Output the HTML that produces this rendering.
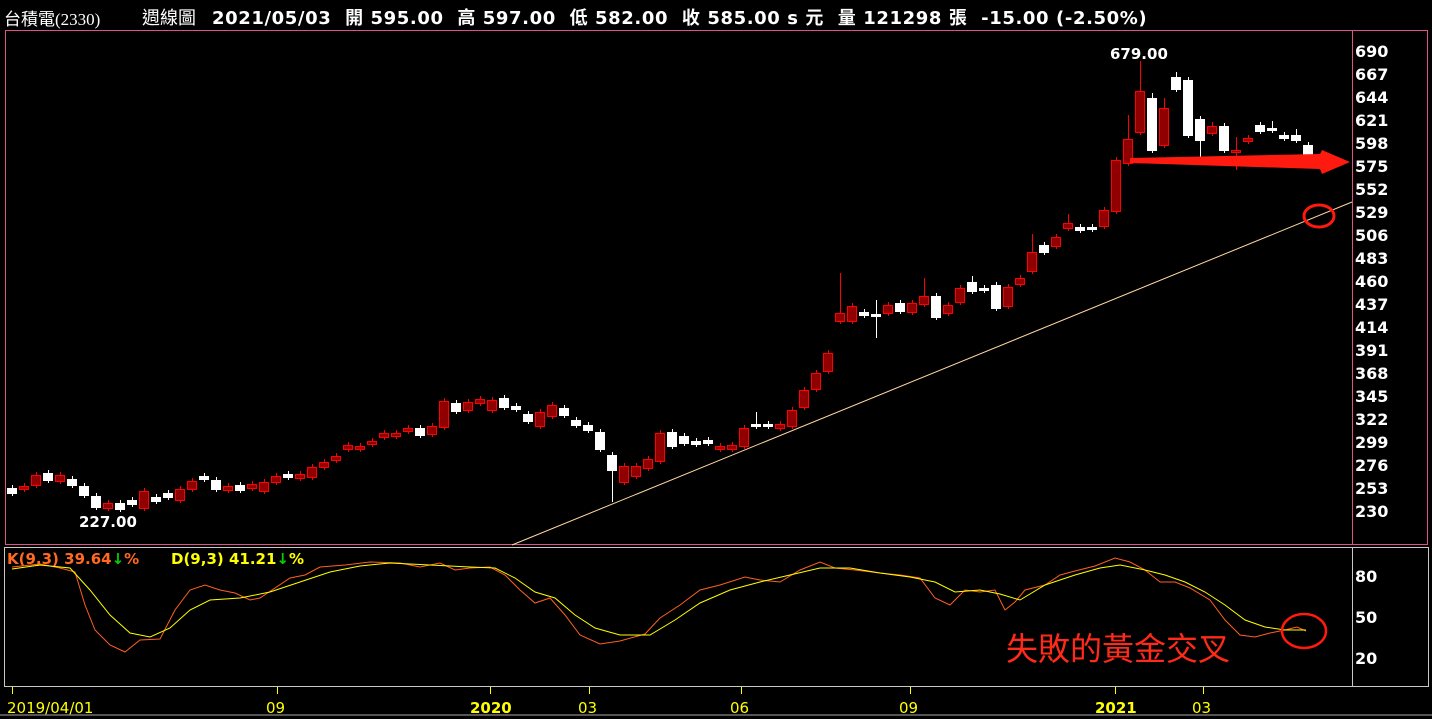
<!DOCTYPE html>
<html><head><meta charset="utf-8"><style>
html,body{margin:0;padding:0;background:#000;width:1432px;height:719px;overflow:hidden}
.h{position:absolute;top:4px;color:#fff;font:bold 18px "DejaVu Sans","Noto Sans CJK TC",sans-serif;white-space:nowrap;letter-spacing:0.6px}
</style></head><body>
<div class="h" style="left:4px;font:17px 'Liberation Serif','Noto Sans CJK TC',serif;top:5px;letter-spacing:0">台積電(2330)</div>
<div class="h" style="left:142px;font-weight:normal;letter-spacing:0"><span style="font-family:'Noto Sans CJK TC',sans-serif">週線圖</span></div>
<div class="h" style="left:212px">2021/05/03&nbsp; 開 595.00&nbsp; 高 597.00&nbsp; 低 582.00&nbsp; 收 585.00 s 元&nbsp; 量 121298 張&nbsp; -15.00 (-2.50%)</div>
<svg id="s" width="1432" height="719" style="position:absolute;left:0;top:0" xmlns="http://www.w3.org/2000/svg">
<rect x="5.5" y="30.5" width="1422" height="514" fill="none" stroke="#e0508a"/>
<line x1="1352.5" y1="30" x2="1352.5" y2="545" stroke="#e0508a"/>
<rect x="4.5" y="547.5" width="1424" height="139" fill="none" stroke="#c8c8c8"/>
<line x1="1352.5" y1="547" x2="1352.5" y2="687" stroke="#c8c8c8"/>
<line x1="0" y1="715" x2="1432" y2="715" stroke="#555" stroke-width="2"/>
<g fill="#fff" font-family="DejaVu Sans,sans-serif" font-weight="bold" font-size="16">
<text x="1355" y="57">690</text><text x="1355" y="80">667</text><text x="1355" y="103">644</text><text x="1355" y="126">621</text><text x="1355" y="149">598</text><text x="1355" y="172">575</text><text x="1355" y="195">552</text><text x="1355" y="218">529</text><text x="1355" y="241">506</text><text x="1355" y="264">483</text><text x="1355" y="287">460</text><text x="1355" y="310">437</text><text x="1355" y="333">414</text><text x="1355" y="356">391</text><text x="1355" y="379">368</text><text x="1355" y="402">345</text><text x="1355" y="425">322</text><text x="1355" y="448">299</text><text x="1355" y="471">276</text><text x="1355" y="494">253</text><text x="1355" y="517">230</text>
<text x="1355" y="582">80</text><text x="1355" y="623">50</text><text x="1355" y="664">20</text>
</g>
<g fill="#fff" font-family="DejaVu Sans,sans-serif" font-weight="bold" font-size="15">
<text x="1110" y="59">679.00</text><text x="79" y="527">227.00</text>
</g>
<line x1="512" y1="545" x2="1352" y2="202" stroke="#ffd8a0" stroke-width="1"/>
<g id="c"></g>
<polygon points="1130,158 1320,154 1322,150 1350,162 1322,174 1320,169 1130,163" fill="#ff1a10"/>
<ellipse cx="1319" cy="216" rx="15" ry="11" fill="none" stroke="#ff1a10" stroke-width="3"/>
<g font-family="DejaVu Sans,sans-serif" font-weight="bold" font-size="15">
<text x="7" y="564" fill="#ff6a20">K(9,3) 39.64<tspan fill="#00d000">↓</tspan>%</text>
<text x="171" y="564" fill="#ffff00">D(9,3) 41.21<tspan fill="#00d000">↓</tspan>%</text>
</g>
<polyline fill="none" stroke="#ff6020" stroke-width="1" points="12,567 40,564 60,568 75,572 85,605 95,630 110,645 125,652 140,640 160,639 175,610 190,590 205,585 220,590 235,593 250,600 260,598 275,588 290,578 305,575 320,567 345,565 370,562 400,563 420,567 440,563 455,570 470,568 490,567 505,575 520,590 535,603 550,598 565,615 580,635 600,644 620,641 645,634 660,618 680,605 700,590 720,585 745,577 760,580 780,582 800,570 820,562 835,568 855,570 880,573 900,575 920,578 935,598 950,605 965,590 980,592 995,590 1005,610 1015,602 1025,590 1045,585 1060,575 1075,571 1095,566 1115,558 1130,562 1145,570 1160,582 1175,582 1190,588 1210,600 1225,620 1240,635 1255,637 1270,633 1285,630 1297,627 1306,631"/>
<polyline fill="none" stroke="#ffff00" stroke-width="1" points="12,569 40,565 70,568 90,590 110,615 130,633 150,637 170,628 190,610 210,600 240,598 270,592 300,582 330,572 360,566 390,563 430,565 470,567 495,568 515,578 535,592 555,598 575,615 595,628 620,635 650,635 675,620 700,603 730,590 760,582 790,575 820,568 850,568 880,573 910,577 935,582 955,592 980,590 1000,594 1020,600 1045,585 1075,575 1100,568 1120,565 1145,570 1165,575 1185,582 1205,592 1225,605 1245,620 1265,627 1285,630 1306,630"/>
<ellipse cx="1304" cy="631" rx="22" ry="17" fill="none" stroke="#ff1a10" stroke-width="2.5"/>
<text x="1006" y="660" fill="#ff2a1a" font-family="Noto Sans CJK TC,sans-serif" font-size="32">失敗的黃金交叉</text>
<g stroke="#ffff00"><line x1="12.5" y1="687" x2="12.5" y2="694"/><line x1="277.5" y1="687" x2="277.5" y2="694"/><line x1="490.5" y1="687" x2="490.5" y2="694"/><line x1="589.5" y1="687" x2="589.5" y2="694"/><line x1="741.5" y1="687" x2="741.5" y2="694"/><line x1="910.5" y1="687" x2="910.5" y2="694"/><line x1="1115.5" y1="687" x2="1115.5" y2="694"/><line x1="1203.5" y1="687" x2="1203.5" y2="694"/></g>
<g fill="#ffff00" font-family="DejaVu Sans,sans-serif" font-size="15">
<text x="7" y="713">2019/04/01</text><text x="266" y="713">09</text><text x="470" y="713" font-weight="bold">2020</text><text x="578" y="713">03</text><text x="730" y="713">06</text><text x="899" y="713">09</text><text x="1095" y="713" font-weight="bold">2021</text><text x="1192" y="713">03</text>
</g>
</svg>
<script>
var d=[[12,'w',488,493],[24,'r',486,489],[36,'r',475,485],[48,'w',473,480],[60,'r',475,481],[72,'w',479,485],[84,'w',486,495],[96,'w',496,507],[108,'r',503,508],[120,'w',503,509],[132,'w',500,504],[144,'r',491,508],[156,'w',497,501],[168,'w',493,497],[180,'r',489,500],[192,'r',481,489],[204,'w',476,479],[216,'w',480,489],[228,'r',486,490],[240,'w',485,490],[252,'r',484,488],[264,'r',482,491],[276,'r',476,482],[288,'w',474,477],[300,'r',474,478],[312,'r',467,477],[324,'r',462,467],[336,'r',456,460],[348,'r',445,449],[360,'r',446,449],[372,'r',441,444],[384,'r',433,437],[396,'r',433,436],[408,'r',428,431],[420,'w',428,435],[432,'r',426,434],[444,'r',401,427],[456,'w',403,411],[468,'r',402,410],[480,'r',399,403],[492,'r',400,410],[504,'w',398,407],[516,'w',406,409],[528,'w',414,421],[540,'r',412,426],[552,'r',405,416],[564,'w',408,415],[576,'w',420,425],[588,'w',425,430],[600,'w',432,449],[612,'w',455,470,502],[624,'r',466,482],[636,'r',466,476],[648,'r',459,468],[660,'r',433,461],[672,'w',432,446],[684,'w',436,443],[696,'w',441,444],[708,'w',440,443],[720,'r',446,449],[732,'r',445,449],[744,'r',428,446],[756,'w',424,426,412],[768,'w',424,426],[780,'r',424,428],[792,'r',410,426],[804,'r',390,407],[816,'r',373,389],[828,'r',353,371],[840,'r',313,321,273],[852,'r',306,321],[864,'w',312,315],[876,'w',314,316,300,338],[888,'r',305,313],[900,'w',303,311],[912,'r',303,312],[924,'r',296,304,278],[936,'w',296,317],[948,'r',305,313],[960,'r',288,302],[972,'w',282,291,276],[984,'w',288,290],[996,'w',285,308],[1008,'r',287,306],[1020,'r',278,284],[1032,'r',252,271,234],[1044,'w',245,252],[1056,'r',237,246],[1068,'r',223,228,214],[1080,'w',227,230],[1092,'w',227,229],[1104,'r',210,226],[1116,'r',160,211],[1128,'r',139,163,115],[1140,'r',91,132,61],[1152,'w',98,150,93],[1164,'r',108,145,98],[1176,'w',77,89,72],[1188,'w',80,135],[1200,'w',119,140,157],[1212,'r',126,133,122],[1224,'w',126,150],[1236,'r',150,152,137,170],[1248,'r',138,141],[1260,'w',125,131,122],[1272,'w',128,130,121],[1284,'w',135,138],[1296,'w',135,140,129],[1308,'w',145,156,143]];
var h='';d.forEach(function(c){var x=c[0],t=c[1],a=c[2],b=c[3];var hi=c[4]!==undefined?Math.min(c[4],a-3):a-3,lo=c[5]!==undefined?c[5]:(c[4]!==undefined&&c[4]>b?c[4]:b+3);if(c[4]!==undefined&&c[4]>b){hi=a-3;}var col=t=='r'?'#ff0000':'#ffffff';h+='<line x1="'+(x+.5)+'" y1="'+hi+'" x2="'+(x+.5)+'" y2="'+lo+'" stroke="'+col+'"/>';h+='<rect x="'+(x-4.5)+'" y="'+(a+.5)+'" width="9" height="'+Math.max(b-a,2)+'" fill="'+(t=='r'?'#900000':'#fff')+'" stroke="'+col+'"/>';});
document.getElementById('c').innerHTML=h;
</script>
</body></html>
